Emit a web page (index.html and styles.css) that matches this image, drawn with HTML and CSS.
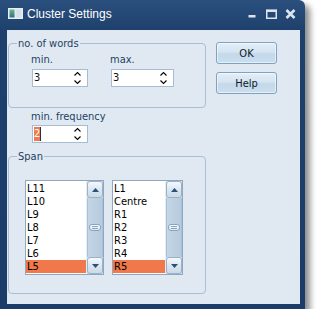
FILE: index.html
```html
<!DOCTYPE html>
<html>
<head>
<meta charset="utf-8">
<link rel="stylesheet" href="styles.css">
</head>
<body>
<div class="window">
  <div class="titlebar">
    <svg class="app-icon" width="15" height="11" viewBox="0 0 15 11">
      <defs>
        <linearGradient id="ig" x1="0" y1="0" x2="0" y2="1">
          <stop offset="0" stop-color="#6fb38c"/>
          <stop offset="1" stop-color="#2f6f86"/>
        </linearGradient>
      </defs>
      <rect x="0" y="0" width="15" height="11" fill="#e9eef3"/>
      <rect x="1.5" y="1.5" width="5" height="8" fill="url(#ig)"/>
      <rect x="7.5" y="1.5" width="6" height="8" fill="#d6e0e9"/>
    </svg>
    <span class="title">Cluster Settings</span>
    <div class="caption">
      <svg class="cap-min" width="8" height="10" viewBox="0 0 8 10"><rect x="0.5" y="6" width="7" height="2.5" fill="#dbe4ee"/></svg>
      <svg class="cap-max" width="11" height="10" viewBox="0 0 11 10"><path d="M0.75 1.5H10.25V9.25H0.75Z" fill="none" stroke="#dbe4ee" stroke-width="1.5"/><rect x="0" y="0.5" width="11" height="2.5" fill="#dbe4ee"/></svg>
      <svg class="cap-close" width="11" height="10" viewBox="0 0 11 10"><path d="M1.5 1L9.5 9M9.5 1L1.5 9" stroke="#dbe4ee" stroke-width="2.6"/></svg>
    </div>
  </div>
  <div class="client">
    <div class="main-col">
      <fieldset class="group">
        <legend>no. of words</legend>
        <div class="field-row">
          <div class="field f-min">
            <label>min.</label>
            <div class="spin s-min"><span class="val">3</span>
              <svg class="arrows" width="8" height="14" viewBox="0 0 8 14"><polyline points="0.5,4.5 3.5,1.5 6.5,4.5" fill="none" stroke="#000" stroke-width="1.1"/><polyline points="0.5,9.5 3.5,12.5 6.5,9.5" fill="none" stroke="#000" stroke-width="1.1"/></svg>
            </div>
          </div>
          <div class="field f-max">
            <label>max.</label>
            <div class="spin s-max"><span class="val">3</span>
              <svg class="arrows" width="8" height="14" viewBox="0 0 8 14"><polyline points="0.5,4.5 3.5,1.5 6.5,4.5" fill="none" stroke="#000" stroke-width="1.1"/><polyline points="0.5,9.5 3.5,12.5 6.5,9.5" fill="none" stroke="#000" stroke-width="1.1"/></svg>
            </div>
          </div>
        </div>
      </fieldset>
      <div class="field freq">
        <label>min. frequency</label>
        <div class="spin s-min"><span class="val"><span class="sel">2</span><span class="caret"></span></span>
          <svg class="arrows" width="8" height="14" viewBox="0 0 8 14"><polyline points="0.5,4.5 3.5,1.5 6.5,4.5" fill="none" stroke="#000" stroke-width="1.1"/><polyline points="0.5,9.5 3.5,12.5 6.5,9.5" fill="none" stroke="#000" stroke-width="1.1"/></svg>
        </div>
      </div>
      <fieldset class="group span">
        <legend>Span</legend>
        <div class="lists">
          <div class="listbox lb-left">
            <div class="items">
              <div class="item">L11</div>
              <div class="item">L10</div>
              <div class="item">L9</div>
              <div class="item">L8</div>
              <div class="item">L7</div>
              <div class="item">L6</div>
              <div class="item sel">L5</div>
            </div>
            <div class="scrollbar">
              <div class="sb-btn"><svg width="7" height="4" viewBox="0 0 7 4"><polygon points="0,4 3.5,0 7,4" fill="#2b5079"/></svg></div>
              <div class="sb-track"><div class="grip"></div></div>
              <div class="sb-btn"><svg width="7" height="4" viewBox="0 0 7 4"><polygon points="0,0 3.5,4 7,0" fill="#2b5079"/></svg></div>
            </div>
          </div>
          <div class="listbox lb-right">
            <div class="items">
              <div class="item">L1</div>
              <div class="item">Centre</div>
              <div class="item">R1</div>
              <div class="item">R2</div>
              <div class="item">R3</div>
              <div class="item">R4</div>
              <div class="item sel">R5</div>
            </div>
            <div class="scrollbar">
              <div class="sb-btn"><svg width="7" height="4" viewBox="0 0 7 4"><polygon points="0,4 3.5,0 7,4" fill="#2b5079"/></svg></div>
              <div class="sb-track"><div class="grip"></div></div>
              <div class="sb-btn"><svg width="7" height="4" viewBox="0 0 7 4"><polygon points="0,0 3.5,4 7,0" fill="#2b5079"/></svg></div>
            </div>
          </div>
        </div>
      </fieldset>
    </div>
    <div class="buttons">
      <button class="btn">OK</button>
      <button class="btn">Help</button>
    </div>
  </div>
</div>
</body>
</html>
```
FILE: styles.css
```css
* { box-sizing: border-box; }

body {
  margin: 0;
  background: #ffffff;
  font-family: "DejaVu Sans Condensed", "Liberation Sans", sans-serif;
  font-size: 11px;
}

.window {
  width: 305px;
  height: 309px;
  background: linear-gradient(#2b507e, #1e406c 30px, #1b3c68);
  border-radius: 0 6px 0 0;
  box-shadow: 5px 5px 6px rgba(0, 0, 0, 0.45);
  display: flex;
  flex-direction: column;
  padding: 0 5px 5px 7px;
}

.titlebar {
  height: 30px;
  display: flex;
  align-items: flex-start;
  flex: none;
}

.app-icon {
  margin: 8px 0 0 1px;
  flex: none;
}

.title {
  margin: 7px 0 0 4px;
  font-family: "Liberation Sans", sans-serif;
  font-size: 12px;
  line-height: 14px;
  color: #ffffff;
}

.caption {
  margin-left: auto;
  margin-right: 4px;
  margin-top: 9px;
  display: flex;
}

.cap-max { margin-left: 10px; }
.cap-close { margin-left: 8px; }

.client {
  flex: 1;
  background: #e0e9f1;
  display: flex;
  gap: 10px;
  padding: 7px 0 0 1px;
}

.main-col {
  width: 198px;
  display: flex;
  flex-direction: column;
  flex: none;
}

.group {
  margin: 0;
  padding: 0;
  border: 1px solid #a8bed4;
  border-radius: 4px;
  min-width: 0;
}

legend {
  margin-left: 8px;
  padding: 0 1px;
  line-height: 13px;
  color: #253f63;
}

label {
  display: block;
  line-height: 13px;
  color: #253f63;
}

.field-row {
  display: flex;
  padding: 3px 0 20px 22px;
}

.f-min { width: 79px; }
.f-min .spin, .f-max .spin { margin-top: 3px; }

.field .spin { margin-left: 1px; }

.spin {
  height: 18px;
  border: 1px solid #a6bcd2;
  background: #ffffff;
  display: flex;
  align-items: center;
  padding-left: 1px;
}

.s-min { width: 56px; }
.s-max { width: 63px; }

.val {
  flex: 1;
  line-height: 14px;
  color: #111;
  display: flex;
  align-items: center;
}

.arrows {
  margin-right: 5px;
  flex: none;
}

.freq {
  margin: 2px 0 0 23px;
}

.freq .spin { margin-top: 2px; }

.sel {
  background: #f0784a;
  color: #ffffff;
}

.caret {
  display: inline-block;
  width: 1px;
  height: 14px;
  background: #1c335a;
}

.span { margin-top: 7px; }

.lists {
  display: flex;
  gap: 8px;
  padding: 17px 0 18px 16px;
}

.listbox {
  height: 95px;
  border: 1px solid #8fa7bf;
  background: #ffffff;
  display: flex;
}

.lb-left { width: 79px; }
.lb-right { width: 71px; }

.items {
  flex: 1;
  padding-top: 1px;
  min-width: 0;
}

.item {
  height: 13px;
  line-height: 13px;
  padding-left: 1px;
  color: #000;
  white-space: nowrap;
}

.scrollbar {
  width: 17px;
  flex: none;
  display: flex;
  flex-direction: column;
  background: #d3e0ec;
  border-left: 1px solid #e6edf4;
}

.sb-btn {
  height: 17px;
  border: 1px solid #98b2ca;
  border-radius: 3px;
  background: linear-gradient(#f5f8fb, #dbe6f0 50%, #cbdbe8);
  display: flex;
  align-items: center;
  justify-content: center;
  flex: none;
}

.sb-track {
  flex: 1;
  background: linear-gradient(90deg, #c4d6e6, #b6cbde);
  border-left: 1px solid #a9c0d6;
  border-right: 1px solid #a9c0d6;
  display: flex;
  align-items: center;
  justify-content: center;
}

.grip {
  width: 12px;
  height: 7px;
  border: 1px solid #87a3bf;
  border-radius: 3px;
  background: linear-gradient(#f7fafc, #dde8f1);
  box-shadow: inset 0 2px 0 -1px #f7fafc;
  position: relative;
}

.grip::before {
  content: "";
  display: block;
  margin: 1px auto 0;
  width: 6px;
  height: 3px;
  border-top: 1px solid #8aa5bf;
  border-bottom: 1px solid #8aa5bf;
  box-sizing: border-box;
}

.buttons {
  display: flex;
  flex-direction: column;
  gap: 8px;
  padding-top: 5px;
}

.btn {
  width: 61px;
  height: 22px;
  padding: 0;
  border: 1px solid #7fa2c2;
  border-radius: 3px;
  background: linear-gradient(#e4eef7, #d4e4f1 45%, #c3d8e9 55%, #cadeee);
  box-shadow: inset 0 0 0 1px rgba(255, 255, 255, 0.55);
  font-family: "DejaVu Sans Condensed", "Liberation Sans", sans-serif;
  font-size: 11px;
  color: #0d1a2b;
}
```
